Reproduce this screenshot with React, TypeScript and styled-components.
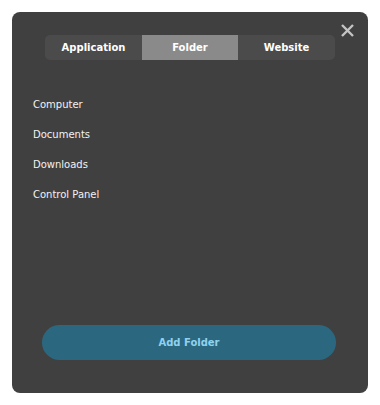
import React, { useState } from "react";
import styled, { createGlobalStyle } from "styled-components";

const Global = createGlobalStyle`
  html, body { margin: 0; padding: 0; background: #ffffff; }
  body { font-family: "DejaVu Sans", Verdana, sans-serif; }
`;

const Page = styled.div`
  padding: 12px;
`;

const Panel = styled.div`
  position: relative;
  width: 356px;
  height: 381px;
  background: #404040;
  border-radius: 8px;
  display: flex;
  flex-direction: column;
  box-sizing: border-box;
`;

const Close = styled.button`
  position: absolute;
  top: 12px;
  right: 14px;
  width: 13px;
  height: 13px;
  padding: 0;
  border: 0;
  background: transparent;
  cursor: pointer;
  display: flex;
`;

const Tabs = styled.div`
  margin: 23px 33px 0 33px;
  height: 25px;
  display: grid;
  grid-template-columns: 97px 96px 97px;
  background: #4b4b4b;
  border-radius: 5px;
  overflow: hidden;
`;

const Tab = styled.div<{ $active?: boolean }>`
  display: flex;
  align-items: center;
  justify-content: center;
  font-weight: bold;
  font-size: 10px;
  color: #ffffff;
  background: ${(p) => (p.$active ? "#8a8a8a" : "transparent")};
`;

const List = styled.div`
  flex: 1;
  margin-top: 29px;
  padding-left: 21px;
  display: flex;
  flex-direction: column;
`;

const Item = styled.div`
  height: 30px;
  display: flex;
  align-items: center;
  font-size: 10px;
  color: #f2f2f2;
`;

const AddButton = styled.button`
  margin: 0 32px 33px 30px;
  height: 35px;
  border: 0;
  border-radius: 18px;
  background: #2b6880;
  color: #8fd2ee;
  font-family: "DejaVu Sans", Verdana, sans-serif;
  font-weight: bold;
  font-size: 10px;
  cursor: pointer;
`;

export default function App() {
  const [tab, setTab] = useState("Folder");
  const tabs = ["Application", "Folder", "Website"];
  const items = ["Computer", "Documents", "Downloads", "Control Panel"];
  return (
    <Page>
      <Global />
      <Panel>
        <Close aria-label="Close">
          <svg width="13" height="13" viewBox="0 0 13 13">
            <path d="M1 1L12 12M12 1L1 12" stroke="#c4c4c4" strokeWidth="2.4" strokeLinecap="butt" />
          </svg>
        </Close>
        <Tabs>
          {tabs.map((t) => (
            <Tab key={t} $active={t === tab} onClick={() => setTab(t)}>
              {t}
            </Tab>
          ))}
        </Tabs>
        <List>
          {items.map((i) => (
            <Item key={i}>{i}</Item>
          ))}
        </List>
        <AddButton>Add Folder</AddButton>
      </Panel>
    </Page>
  );
}
